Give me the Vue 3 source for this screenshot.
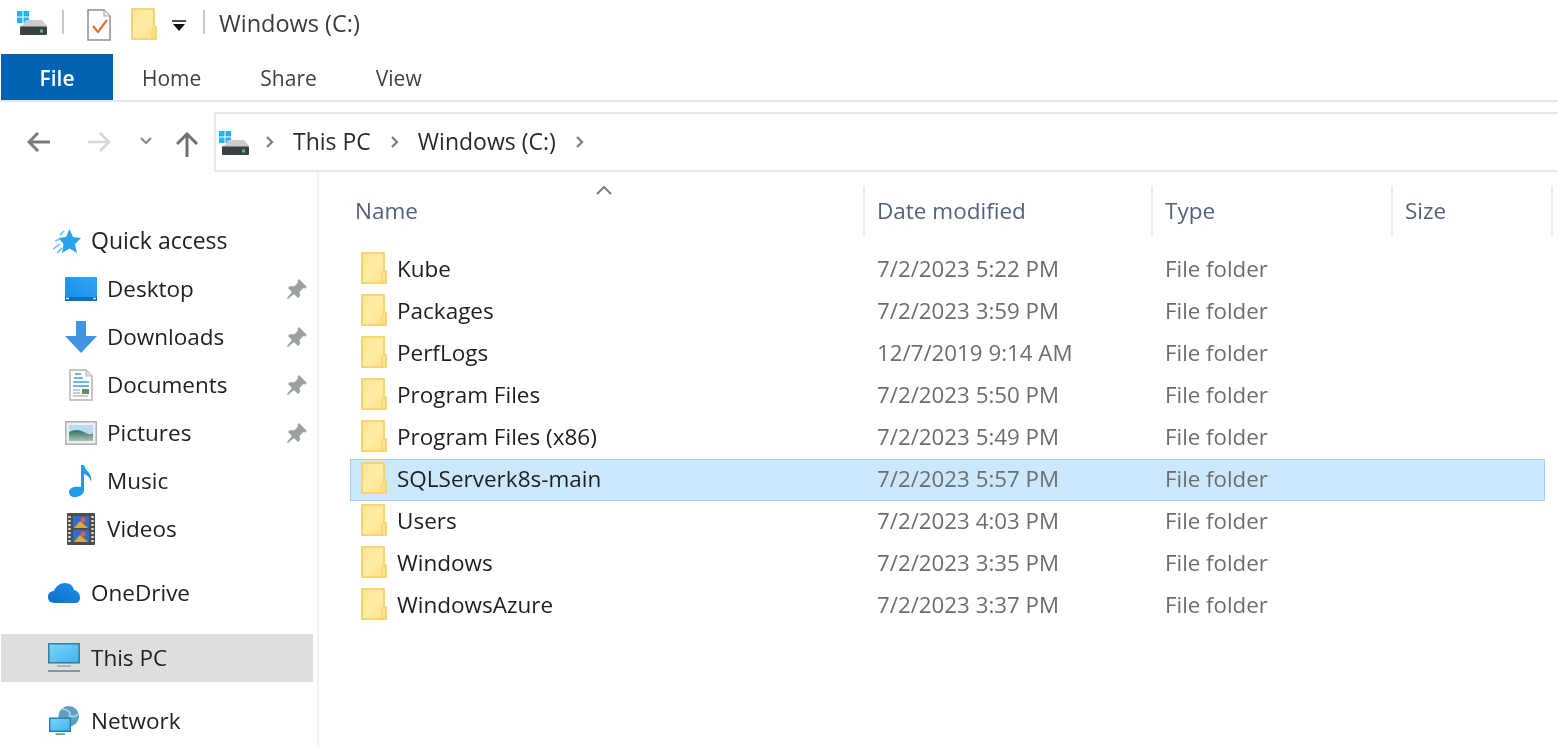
<script setup>
const quick = [
  { name: 'Desktop', icon: 'desktop' },
  { name: 'Downloads', icon: 'downloads' },
  { name: 'Documents', icon: 'documents' },
  { name: 'Pictures', icon: 'pictures' },
  { name: 'Music', icon: 'music', nopin: true },
  { name: 'Videos', icon: 'videos', nopin: true },
]

const files = [
  { name: 'Kube', date: '7/2/2023 5:22 PM' },
  { name: 'Packages', date: '7/2/2023 3:59 PM' },
  { name: 'PerfLogs', date: '12/7/2019 9:14 AM' },
  { name: 'Program Files', date: '7/2/2023 5:50 PM' },
  { name: 'Program Files (x86)', date: '7/2/2023 5:49 PM' },
  { name: 'SQLServerk8s-main', date: '7/2/2023 5:57 PM', selected: true },
  { name: 'Users', date: '7/2/2023 4:03 PM' },
  { name: 'Windows', date: '7/2/2023 3:35 PM' },
  { name: 'WindowsAzure', date: '7/2/2023 3:37 PM' },
]
</script>

<template>
  <div class="win">
    <svg class="defs" aria-hidden="true">
      <defs>
        <linearGradient id="fold" x1="0" y1="0" x2="1" y2="1">
          <stop offset="0" stop-color="#fde692" />
          <stop offset=".5" stop-color="#ffeca6" />
          <stop offset="1" stop-color="#fddf84" />
        </linearGradient>
        <linearGradient id="screen" x1="0" y1="0" x2="1" y2="1">
          <stop offset="0" stop-color="#7fd6fb" />
          <stop offset="1" stop-color="#3fb0ee" />
        </linearGradient>
        <linearGradient id="desk" x1="0" y1="1" x2="1" y2="0">
          <stop offset="0" stop-color="#1a8ae6" />
          <stop offset="1" stop-color="#2fa8f6" />
        </linearGradient>
        <linearGradient id="hills" x1="0" y1="0" x2="0" y2="1">
          <stop offset="0" stop-color="#2f6f63" />
          <stop offset="1" stop-color="#a8c4b0" />
        </linearGradient>
        <linearGradient id="cloud" x1="0" y1="1" x2="1" y2="0">
          <stop offset="0" stop-color="#0b6fc8" />
          <stop offset="1" stop-color="#1f90e8" />
        </linearGradient>
        <symbol id="i-folder" viewBox="0 0 26 32">
          <path d="M1 1H23V19H25V31H1Z" fill="url(#fold)" stroke="#f6d472" stroke-width="2" stroke-linejoin="round" />
          <path d="M21 31V22Q21 20 23 19" fill="none" stroke="#f5d26c" stroke-width="1.200" />
        </symbol>
        <symbol id="i-drive" viewBox="0 0 30 24">
          <rect x="0" y="0" width="5.500" height="5.500" fill="#20b4f5" />
          <rect x="6.500" y="0" width="5.500" height="5.500" fill="#20b4f5" />
          <rect x="0" y="6.500" width="5.500" height="5.500" fill="#20b4f5" />
          <rect x="6.500" y="6.500" width="5.500" height="5.500" fill="#20b4f5" />
          <path d="M6 14 9 9H25L30 15V23H3V15Z" fill="#c9cdcf" />
          <rect x="3" y="15.500" width="27" height="8.500" rx="1" fill="#3c4144" />
          <rect x="23" y="18.500" width="3" height="3" fill="#55c64d" />
        </symbol>
        <symbol id="i-check" viewBox="0 0 24 32">
          <path d="M1 1H17L23 7V31H1Z" fill="#fff" stroke="#8e8e8e" stroke-width="1.500" />
          <path d="M17 1V7H23" fill="#eee" stroke="#a8a8a8" stroke-width="1.200" />
          <path d="M6 17 11 23 20 11" fill="none" stroke="#e8703a" stroke-width="2.200" />
        </symbol>
        <symbol id="i-star" viewBox="0 0 28 26">
          <path d="M16.500 1 20 9 28 10 22 16 24 25 16.500 20.500 9 25 10.500 16 5.500 10 13 9Z" fill="#2aa3ee" />
          <path d="M11 3 7 7M7 11 2 13M7 16 0 21M9 20 4 25" stroke="#7cc8f4" stroke-width="1.800" fill="none" />
        </symbol>
        <symbol id="i-desktop" viewBox="0 0 32 24">
          <rect x="0" y="0" width="32" height="24" rx="1" fill="url(#desk)" />
          <rect x="0" y="20" width="32" height="4" fill="#0f6fb5" />
          <path d="M1 21.500H4M28 21.500H31" stroke="#cfeafc" stroke-width="1.500" />
        </symbol>
        <symbol id="i-downloads" viewBox="0 0 32 32">
          <path d="M11 0H21V15H32L16 32 0 15H11Z" fill="#3f94e4" />
        </symbol>
        <symbol id="i-documents" viewBox="0 0 24 32">
          <path d="M1 1H17L23 7V31H1Z" fill="#fff" stroke="#b4b4b4" stroke-width="1.500" />
          <path d="M17 1V7H23" fill="#e2e2e2" stroke="#b4b4b4" />
          <path d="M6 5H12M5 9H14M4 13H20M4 17H20" stroke="#3da0e4" stroke-width="1.500" />
          <path d="M4 21H11M4 24H11M4 27H19" stroke="#9a9a9a" stroke-width="1.200" />
          <rect x="13" y="20" width="7" height="5" fill="#5f8c6a" />
        </symbol>
        <symbol id="i-pictures" viewBox="0 0 32 24">
          <rect x=".8" y=".8" width="30.400" height="22.400" fill="#f0f0f0" stroke="#b0b0b0" stroke-width="1.500" />
          <rect x="4" y="4" width="24" height="16" fill="#b8dcf0" />
          <path d="M4 11Q12 7 19 11T28 12V20H4Z" fill="url(#hills)" />
        </symbol>
        <symbol id="i-music" viewBox="0 0 24 32">
          <path d="M12 0H15C16 6 24 8 22 17 21 12 18 10 15 9V25C15 29 11 32 6 32 2 32 0 30 0 27 0 23 5 21 12 22Z" fill="#1d9bee" />
        </symbol>
        <symbol id="i-videos" viewBox="0 0 28 32">
          <rect width="28" height="32" rx="1" fill="#4e4e4e" />
          <path d="M2.500 3V29M25.500 3V29" stroke="#d8d8d8" stroke-width="2.500" stroke-dasharray="2 2" />
          <rect x="6" y="3" width="16" height="12" fill="#2f6fd0" />
          <rect x="6" y="17" width="16" height="12" fill="#2f6fd0" />
          <path d="M7 15 13 8 21 15ZM7 29 13 22 21 29Z" fill="#e0a830" />
          <circle cx="16" cy="7" r="2.500" fill="#e85d3a" />
          <circle cx="16" cy="21" r="2.500" fill="#e85d3a" />
        </symbol>
        <symbol id="i-pin" viewBox="0 0 20 20">
          <path d="M12 0 20 8 18 9.500 16.500 9 12.500 13 13 17 11 19 7 15 1 20 0 19 5 13 1 9 3 7 7 7.500 11 3.500 10.500 2Z" fill="#9aa2a4" />
        </symbol>
        <symbol id="i-onedrive" viewBox="0 0 32 22">
          <path d="M7 21C2 21 0 18 0 15 0 11 3 9 6 9 8 4 12 1 17 1 22 1 25 4 26 8 30 9 32 12 32 16 32 19 30 21 27 21Z" fill="url(#cloud)" />
        </symbol>
        <symbol id="i-pc" viewBox="0 0 32 30">
          <rect x=".8" y=".8" width="30.400" height="19" fill="url(#screen)" stroke="#2f7f9e" stroke-width="1.500" />
          <path d="M9 23H23" stroke="#9aa8ae" stroke-width="1.500" />
          <path d="M0 28H32" stroke="#7f98a8" stroke-width="2" />
        </symbol>
        <symbol id="i-network" viewBox="0 0 32 32">
          <circle cx="21" cy="11" r="11" fill="#5e9fbf" />
          <path d="M14 3Q24 4 22 11 30 12 31 8" fill="none" stroke="#a8d2e6" stroke-width="2" />
          <rect x=".8" y="13" width="22" height="14" fill="url(#screen)" stroke="#1f7fb0" stroke-width="1.500" />
          <path d="M7 30H17" stroke="#7f98a8" stroke-width="2" />
        </symbol>
      </defs>
    </svg>

    <div class="titlebar">
      <svg class="tb-drive"><use href="#i-drive" /></svg>
      <span class="tb-sep"></span>
      <svg class="tb-check"><use href="#i-check" /></svg>
      <svg class="tb-folder"><use href="#i-folder" /></svg>
      <svg class="tb-drop" viewBox="0 0 16 12">
        <path d="M1 1H15" stroke="#111" stroke-width="1.500" />
        <path d="M2 4H14L8 11Z" fill="#111" />
      </svg>
      <span class="tb-sep second"></span>
      <span class="tb-title">Windows (C:)</span>
    </div>

    <div class="tabs">
      <div class="tab file">File</div>
      <div class="tab home">Home</div>
      <div class="tab share">Share</div>
      <div class="tab view">View</div>
    </div>

    <div class="nav">
      <div class="nav-btns">
        <svg class="nb back" viewBox="0 0 24 20">
          <path d="M23 10H2M11 1 2 10 11 19" fill="none" stroke="#7b7b7b" stroke-width="3" />
        </svg>
        <svg class="nb forward" viewBox="0 0 24 20">
          <path d="M1 10H22M13 1 22 10 13 19" fill="none" stroke="#d6d6d6" stroke-width="2.600" />
        </svg>
        <svg class="nb recent" viewBox="0 0 12 8">
          <path d="M1 1 6 6 11 1" fill="none" stroke="#8a8a8a" stroke-width="2.200" />
        </svg>
        <svg class="nb up" viewBox="0 0 22 25">
          <path d="M11 25V3M1 12 11 2 21 12" fill="none" stroke="#6f6f6f" stroke-width="3" />
        </svg>
      </div>
      <div class="address">
        <svg class="addr-drive"><use href="#i-drive" /></svg>
        <svg class="crumb first" viewBox="0 0 9 12"><path d="M2 1 7 6 2 11" fill="none" stroke="#808080" stroke-width="2.400" /></svg>
        <span class="addr-text">This PC</span>
        <svg class="crumb" viewBox="0 0 9 12"><path d="M2 1 7 6 2 11" fill="none" stroke="#808080" stroke-width="2.400" /></svg>
        <span class="addr-text">Windows (C:)</span>
        <svg class="crumb" viewBox="0 0 9 12"><path d="M2 1 7 6 2 11" fill="none" stroke="#808080" stroke-width="2.400" /></svg>
      </div>
    </div>

    <div class="body">
      <aside class="side">
        <div class="side-row top">
          <svg class="ic-star"><use href="#i-star" /></svg>
          <span class="label qa">Quick access</span>
        </div>
        <div v-for="q in quick" :key="q.name" class="side-row child">
          <span class="ic-box"><svg :class="'ic-' + q.icon"><use :href="'#i-' + q.icon" /></svg></span>
          <span class="label side-name">{{ q.name }}</span>
          <svg v-if="!q.nopin" class="pin"><use href="#i-pin" /></svg>
        </div>
        <div class="side-row top group">
          <svg class="ic-top"><use href="#i-onedrive" /></svg>
          <span class="label">OneDrive</span>
        </div>
        <div class="side-row top group current">
          <svg class="ic-top tall"><use href="#i-pc" /></svg>
          <span class="label">This PC</span>
        </div>
        <div class="side-row top group last">
          <svg class="ic-top tall"><use href="#i-network" /></svg>
          <span class="label">Network</span>
        </div>
      </aside>

      <main class="main">
        <svg class="sort" viewBox="0 0 16 9">
          <path d="M1 8 8 1 15 8" fill="none" stroke="#7c7c7c" stroke-width="2" />
        </svg>
        <div class="head">
          <div class="hcell name-col">Name</div>
          <div class="hcell date-col">Date modified</div>
          <div class="hcell type-col">Type</div>
          <div class="hcell size-col">Size</div>
        </div>
        <div class="list">
          <div v-for="f in files" :key="f.name" class="row" :class="{ selected: f.selected }">
            <div class="fname">
              <svg class="folder"><use href="#i-folder" /></svg>
              <span>{{ f.name }}</span>
            </div>
            <div class="fmeta">{{ f.date }}</div>
            <div class="fmeta">File folder</div>
          </div>
        </div>
      </main>
    </div>
  </div>
</template>

<style>
html,
body {
  margin: 0;
  background: #fff;
  overflow: hidden;
}
</style>

<style scoped>
.win {
  width: 1558px;
  height: 747px;
  overflow: hidden;
  background: #fff;
  color: #1c1c1c;
  font-family: "Open Sans", "Noto Sans", sans-serif;
  font-size: 22px;
  filter: blur(0.6px);
}
.defs {
  display: block;
  width: 0;
  height: 0;
}

.titlebar {
  height: 54px;
  display: flex;
  align-items: center;
  padding-left: 17px;
  box-sizing: border-box;
}
.tb-drive {
  width: 30px;
  height: 24px;
  margin-top: -8px;
}
.tb-sep {
  width: 2px;
  height: 24px;
  background: #c8c8c8;
  margin-left: 15px;
  margin-top: -10px;
}
.tb-sep.second {
  margin-left: 16px;
}
.tb-check {
  width: 24px;
  height: 32px;
  margin-left: 23px;
  margin-top: -4px;
}
.tb-folder {
  width: 26px;
  height: 32px;
  margin-left: 20px;
  margin-top: -6px;
}
.tb-drop {
  width: 16px;
  height: 12px;
  margin-left: 14px;
  margin-top: -2px;
}
.tb-title {
  margin-left: 14px;
  margin-top: -8px;
  font-size: 23.500px;
  color: #3c3c3c;
}

.tabs {
  height: 48px;
  display: flex;
  border-bottom: 2px solid #e6e6e6;
  box-sizing: border-box;
  font-size: 21px;
}
.tab {
  line-height: 48px;
  color: #3f3f3f;
}
.tab.file {
  width: 112px;
  margin-left: 1px;
  background: #0063b1;
  color: #fff;
  text-align: center;
  font-weight: 600;
}
.tab.home {
  margin-left: 29px;
}
.tab.share {
  margin-left: 59px;
}
.tab.view {
  margin-left: 59px;
}

.nav {
  height: 70px;
  display: flex;
  padding-top: 10px;
  box-sizing: border-box;
}
.nav-btns {
  width: 214px;
  display: flex;
  align-items: center;
  flex: none;
  padding-left: 27px;
  box-sizing: border-box;
}
.nb.back {
  width: 24px;
  height: 20px;
}
.nb.forward {
  width: 24px;
  height: 20px;
  margin-left: 36px;
}
.nb.recent {
  width: 12px;
  height: 8px;
  margin-left: 29px;
  margin-top: -3px;
}
.nb.up {
  width: 22px;
  height: 25px;
  margin-left: 24px;
  margin-top: 4px;
}
.address {
  flex: 1;
  height: 60px;
  border: 2px solid #e8e8e8;
  border-right: 0;
  display: flex;
  align-items: center;
  box-sizing: border-box;
  padding-left: 3px;
  color: #2a2a2a;
  font-size: 23px;
}
.addr-text {
  padding-bottom: 3px;
}
.addr-drive {
  width: 30px;
  height: 24px;
  margin-top: 1px;
}
.crumb {
  width: 9px;
  height: 12px;
  margin: 0 19px;
}
.crumb.first {
  margin-left: 16px;
}

.body {
  display: flex;
  height: 575px;
}
.side {
  width: 319px;
  flex: none;
  box-sizing: border-box;
  border-right: 2px solid #f3f3f3;
  padding-top: 45px;
  font-size: 22.500px;
}
.side-row {
  height: 48px;
  display: flex;
  align-items: center;
  color: #222;
}
.label {
  padding-bottom: 2px;
}
.label.qa {
  font-size: 23px;
}
.side-row.top {
  padding-left: 48px;
}
.side-row.child {
  padding-left: 65px;
  padding-right: 10px;
}
.side-row.group {
  margin-top: 16px;
}
.side-row.current {
  margin-top: 17px;
  background: #dedede;
  width: 312px;
  margin-left: 1px;
  padding-left: 47px;
  box-sizing: border-box;
}
.side-row.last {
  margin-top: 15px;
}
.ic-star {
  width: 28px;
  height: 26px;
  margin: 0 10px 0 5px;
}
.ic-top {
  width: 32px;
  height: 22px;
  margin-right: 11px;
}
.ic-top.tall {
  height: 30px;
}
.ic-box {
  width: 32px;
  margin-right: 10px;
  display: flex;
  justify-content: center;
}
.ic-desktop,
.ic-pictures {
  width: 32px;
  height: 24px;
}
.ic-downloads {
  width: 32px;
  height: 32px;
}
.ic-documents,
.ic-music {
  width: 24px;
  height: 32px;
}
.ic-videos {
  width: 28px;
  height: 32px;
}
.side-name {
  flex: 1;
}
.pin {
  width: 20px;
  height: 20px;
}

.main {
  flex: 1;
  position: relative;
  padding-left: 31px;
  padding-top: 14px;
}
.sort {
  position: absolute;
  left: 277px;
  top: 14px;
  width: 16px;
  height: 9px;
}
.head {
  display: flex;
  height: 50px;
  color: #51647c;
  margin-bottom: 13px;
  font-size: 22.500px;
}
.hcell {
  box-sizing: border-box;
  border-right: 2px solid #ededed;
  padding-left: 12px;
  line-height: 50px;
}
.name-col {
  width: 515px;
  padding-left: 5px;
}
.date-col {
  width: 288px;
}
.type-col {
  width: 240px;
}
.size-col {
  width: 160px;
}
.row {
  width: 1195px;
  height: 42px;
  box-sizing: border-box;
  border: 1px solid transparent;
  display: grid;
  grid-template-columns: 526px 288px 1fr;
  align-items: center;
}
.row.selected {
  background: #cce8ff;
  border-color: #99d1ff;
}
.fname {
  display: flex;
  align-items: center;
  padding-left: 10px;
  color: #1e1e1e;
  font-size: 22.500px;
}
.fname span {
  padding-bottom: 4px;
}
.folder {
  width: 26px;
  height: 32px;
  margin-right: 10px;
  margin-bottom: 4px;
  flex: none;
}
.fmeta {
  color: #6d6d6d;
  font-size: 22.300px;
  padding-bottom: 4px;
}
</style>
